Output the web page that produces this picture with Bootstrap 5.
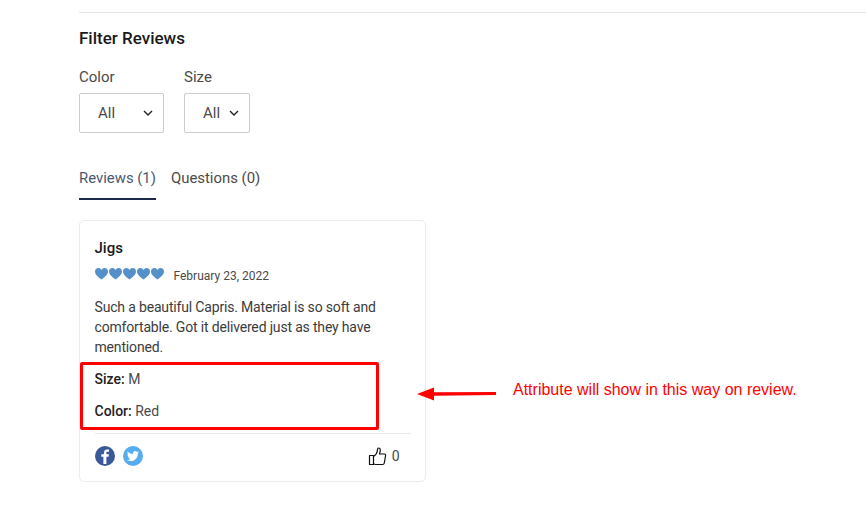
<!DOCTYPE html>
<html lang="en">
<head>
  <meta charset="UTF-8">
  <meta name="viewport" content="width=device-width, initial-scale=1.0">
  <title>Filter Reviews</title>
  <link href="https://cdn.jsdelivr.net/npm/bootstrap@5.3.0/dist/css/bootstrap.min.css" rel="stylesheet">
  <style>
    body {
      font-family: Roboto, "Liberation Sans", sans-serif;
      font-size: 14px;
      color: #333;
      background: #fff;
      overflow: hidden;
    }
    .review-page {
      position: relative;
      height: 531px;
      padding: 12px 0 0 79px;
    }
    .top-rule {
      border-top: 1px solid #e5e5e5;
      height: 1px;
    }
    .filter-title {
      font-size: 17px;
      font-weight: 500;
      line-height: 20px;
      color: #1a1a1a;
      margin: 15px 0 0;
    }
    .filter-row {
      margin-top: 21px;
      gap: 20px;
    }
    .filter-label {
      font-size: 15px;
      line-height: 16px;
      margin-bottom: 8px;
      color: #4a4a4a;
    }
    .filter-box {
      height: 40px;
      border: 1px solid #ccc;
      border-radius: 2px;
      padding-left: 18px;
      font-size: 15px;
      color: #4a4a4a;
    }
    .filter-box svg { display: block; }
    .box-color { width: 85px; padding-right: 10px; }
    .box-size { width: 66px; padding-right: 10px; }
    .review-tabs {
      margin-top: 35px;
      gap: 15px;
      font-size: 14.9px;
      line-height: 20px;
      color: #4a4a4a;
    }
    .review-tab { padding-bottom: 10px; }
    .review-tab.is-active {
      color: #4a5873;
      border-bottom: 2px solid #1c2b4a;
    }
    .review-card {
      width: 347px;
      height: 262px;
      margin-top: 20px;
      border: 1px solid #ececec;
      border-radius: 5px;
      padding: 17px 14.500px 0;
    }
    .review-name {
      font-size: 15px;
      font-weight: 500;
      line-height: 20px;
      color: #1a1a1a;
    }
    .review-meta {
      margin-top: 8px;
      height: 20px;
      font-size: 12px;
      color: #4a4a4a;
    }
    .hearts { gap: 1px; margin-right: 10px; position: relative; top: -2px; }
    .hearts svg { display: block; }
    .review-text {
      margin: 11px 0 0;
      font-size: 14px;
      letter-spacing: -0.17px;
      line-height: 20px;
      color: #3c3c3c;
    }
    .attr-line { line-height: 20px; color: #4a4a4a; }
    .attr-line b { font-weight: 500; color: #222; }
    .attr-first { margin-top: 12px; }
    .attr-second { margin-top: 12px; }
    .review-foot {
      margin-top: 12px;
      border-top: 1px solid #e8e8e8;
      padding: 12px 11px 0 0;
    }
    .social-set { gap: 8px; }
    .social-set svg, .like-set svg { display: block; }
    .like-set { gap: 5px; color: #4a4a4a; line-height: 14px; }
    .note-box {
      position: absolute;
      left: 80px;
      top: 362px;
      width: 299px;
      height: 68px;
      border: 3px solid #f00;
      border-radius: 2px;
    }
    .note-arrow {
      position: absolute;
      left: 416px;
      top: 385px;
    }
    .note-text {
      position: absolute;
      left: 513px;
      top: 380px;
      font-family: "Liberation Sans", Arial, sans-serif;
      font-size: 16px;
      line-height: 20px;
      color: #f00;
      white-space: nowrap;
    }
  </style>
</head>
<body>
  <div class="review-page">
    <div class="top-rule"></div>
    <h2 class="filter-title">Filter Reviews</h2>

    <div class="d-flex filter-row">
      <div>
        <div class="filter-label">Color</div>
        <div class="filter-box box-color d-flex align-items-center justify-content-between">
          <span>All</span>
          <svg width="10" height="6" viewBox="0 0 10 6"><path d="M1 1l4 4 4-4" fill="none" stroke="#222" stroke-width="1.4"/></svg>
        </div>
      </div>
      <div>
        <div class="filter-label">Size</div>
        <div class="filter-box box-size d-flex align-items-center justify-content-between">
          <span>All</span>
          <svg width="10" height="6" viewBox="0 0 10 6"><path d="M1 1l4 4 4-4" fill="none" stroke="#222" stroke-width="1.4"/></svg>
        </div>
      </div>
    </div>

    <div class="d-flex review-tabs">
      <div class="review-tab is-active">Reviews (1)</div>
      <div class="review-tab">Questions (0)</div>
    </div>

    <div class="review-card">
      <div class="review-name">Jigs</div>
      <div class="review-meta d-flex align-items-center">
        <div class="hearts d-flex">
          <svg width="13" height="12" viewBox="0 0 13 12"><path d="M6.5 11.5C4 9.500 0 7 0 3.500 0 1.500 1.500 0 3.300 0 4.700 0 5.900.8 6.500 2 7.100.8 8.300 0 9.700 0 11.500 0 13 1.500 13 3.500 13 7 9 9.500 6.500 11.500z" fill="#5591c8"/></svg>
          <svg width="13" height="12" viewBox="0 0 13 12"><path d="M6.5 11.5C4 9.500 0 7 0 3.500 0 1.500 1.500 0 3.300 0 4.700 0 5.900.8 6.500 2 7.100.8 8.300 0 9.700 0 11.500 0 13 1.500 13 3.500 13 7 9 9.500 6.500 11.500z" fill="#5591c8"/></svg>
          <svg width="13" height="12" viewBox="0 0 13 12"><path d="M6.5 11.5C4 9.500 0 7 0 3.500 0 1.500 1.500 0 3.300 0 4.700 0 5.900.8 6.500 2 7.100.8 8.300 0 9.700 0 11.500 0 13 1.500 13 3.500 13 7 9 9.500 6.500 11.500z" fill="#5591c8"/></svg>
          <svg width="13" height="12" viewBox="0 0 13 12"><path d="M6.5 11.5C4 9.500 0 7 0 3.500 0 1.500 1.500 0 3.300 0 4.700 0 5.900.8 6.500 2 7.100.8 8.300 0 9.700 0 11.500 0 13 1.500 13 3.500 13 7 9 9.500 6.500 11.500z" fill="#5591c8"/></svg>
          <svg width="13" height="12" viewBox="0 0 13 12"><path d="M6.5 11.5C4 9.500 0 7 0 3.500 0 1.500 1.500 0 3.300 0 4.700 0 5.900.8 6.500 2 7.100.8 8.300 0 9.700 0 11.500 0 13 1.500 13 3.500 13 7 9 9.500 6.500 11.500z" fill="#5591c8"/></svg>
        </div>
        <span>February 23, 2022</span>
      </div>
      <p class="review-text">Such a beautiful Capris. Material is so soft and comfortable. Got it delivered just as they have mentioned.</p>
      <div class="attr-line attr-first"><b>Size:</b> M</div>
      <div class="attr-line attr-second"><b>Color:</b> Red</div>
      <div class="review-foot d-flex align-items-center justify-content-between">
        <div class="social-set d-flex">
          <svg width="20" height="20" viewBox="0 0 20 20"><circle cx="10" cy="10" r="10" fill="#3b5998"/><path d="M11.400 18v-7.200h2.200l.3-2.500h-2.500V7c0-.7.2-1.200 1.200-1.200h1.400V3.600c-.3 0-1-.1-1.900-.1-1.900 0-3.200 1.200-3.200 3.300v1.500H6.300v2.500h2.100V18z" fill="#fff"/></svg>
          <svg width="20" height="20" viewBox="0 0 20 20"><circle cx="10" cy="10" r="10" fill="#55acee"/><path d="M16 6.300c-.4.200-.9.300-1.400.4.500-.3.900-.8 1.100-1.400-.5.300-1 .5-1.600.6-.4-.5-1.100-.8-1.800-.8-1.400 0-2.500 1.100-2.500 2.500 0 .2 0 .4.100.6-2.100-.1-3.900-1.100-5.200-2.600-.2.400-.3.800-.3 1.300 0 .9.400 1.600 1.100 2.100-.4 0-.8-.1-1.100-.3 0 1.200.9 2.200 2 2.500-.4.100-.8.100-1.100 0 .3 1 1.200 1.700 2.300 1.700-1 .8-2.300 1.200-3.700 1 1.100.7 2.400 1.100 3.800 1.100 4.600 0 7.100-3.800 7.100-7.100v-.3c.5-.4.900-.8 1.200-1.300z" fill="#fff"/></svg>
        </div>
        <div class="like-set d-flex align-items-center">
          <svg width="19" height="19" viewBox="0 0 19 19"><path d="M5.500 8.500h-4v9h4zM5.500 9.500c1.500-1 3.500-3 3.800-5.500 0-1.500.3-3 1.500-3 1.500 0 1.700 2 1.300 3.500l-.6 2.500h5c1 0 1.300 1 1 2l-1.200 7c-.2 1-.8 1.500-1.800 1.500H7.500c-1 0-2-.5-2-1.500z" fill="#fff" stroke="#111" stroke-width="1.200" stroke-linejoin="round"/></svg>
          <span>0</span>
        </div>
      </div>
    </div>

    <div class="note-box"></div>
    <svg class="note-arrow" width="82" height="18" viewBox="0 0 82 18"><path d="M1 9l17-6.500v4.800L80 7l0 3-62 .8v4.700z" fill="#f00"/></svg>
    <div class="note-text">Attribute will show in this way on review.</div>
  </div>
  <script src="https://cdn.jsdelivr.net/npm/bootstrap@5.3.0/dist/js/bootstrap.bundle.min.js"></script>
</body>
</html>
